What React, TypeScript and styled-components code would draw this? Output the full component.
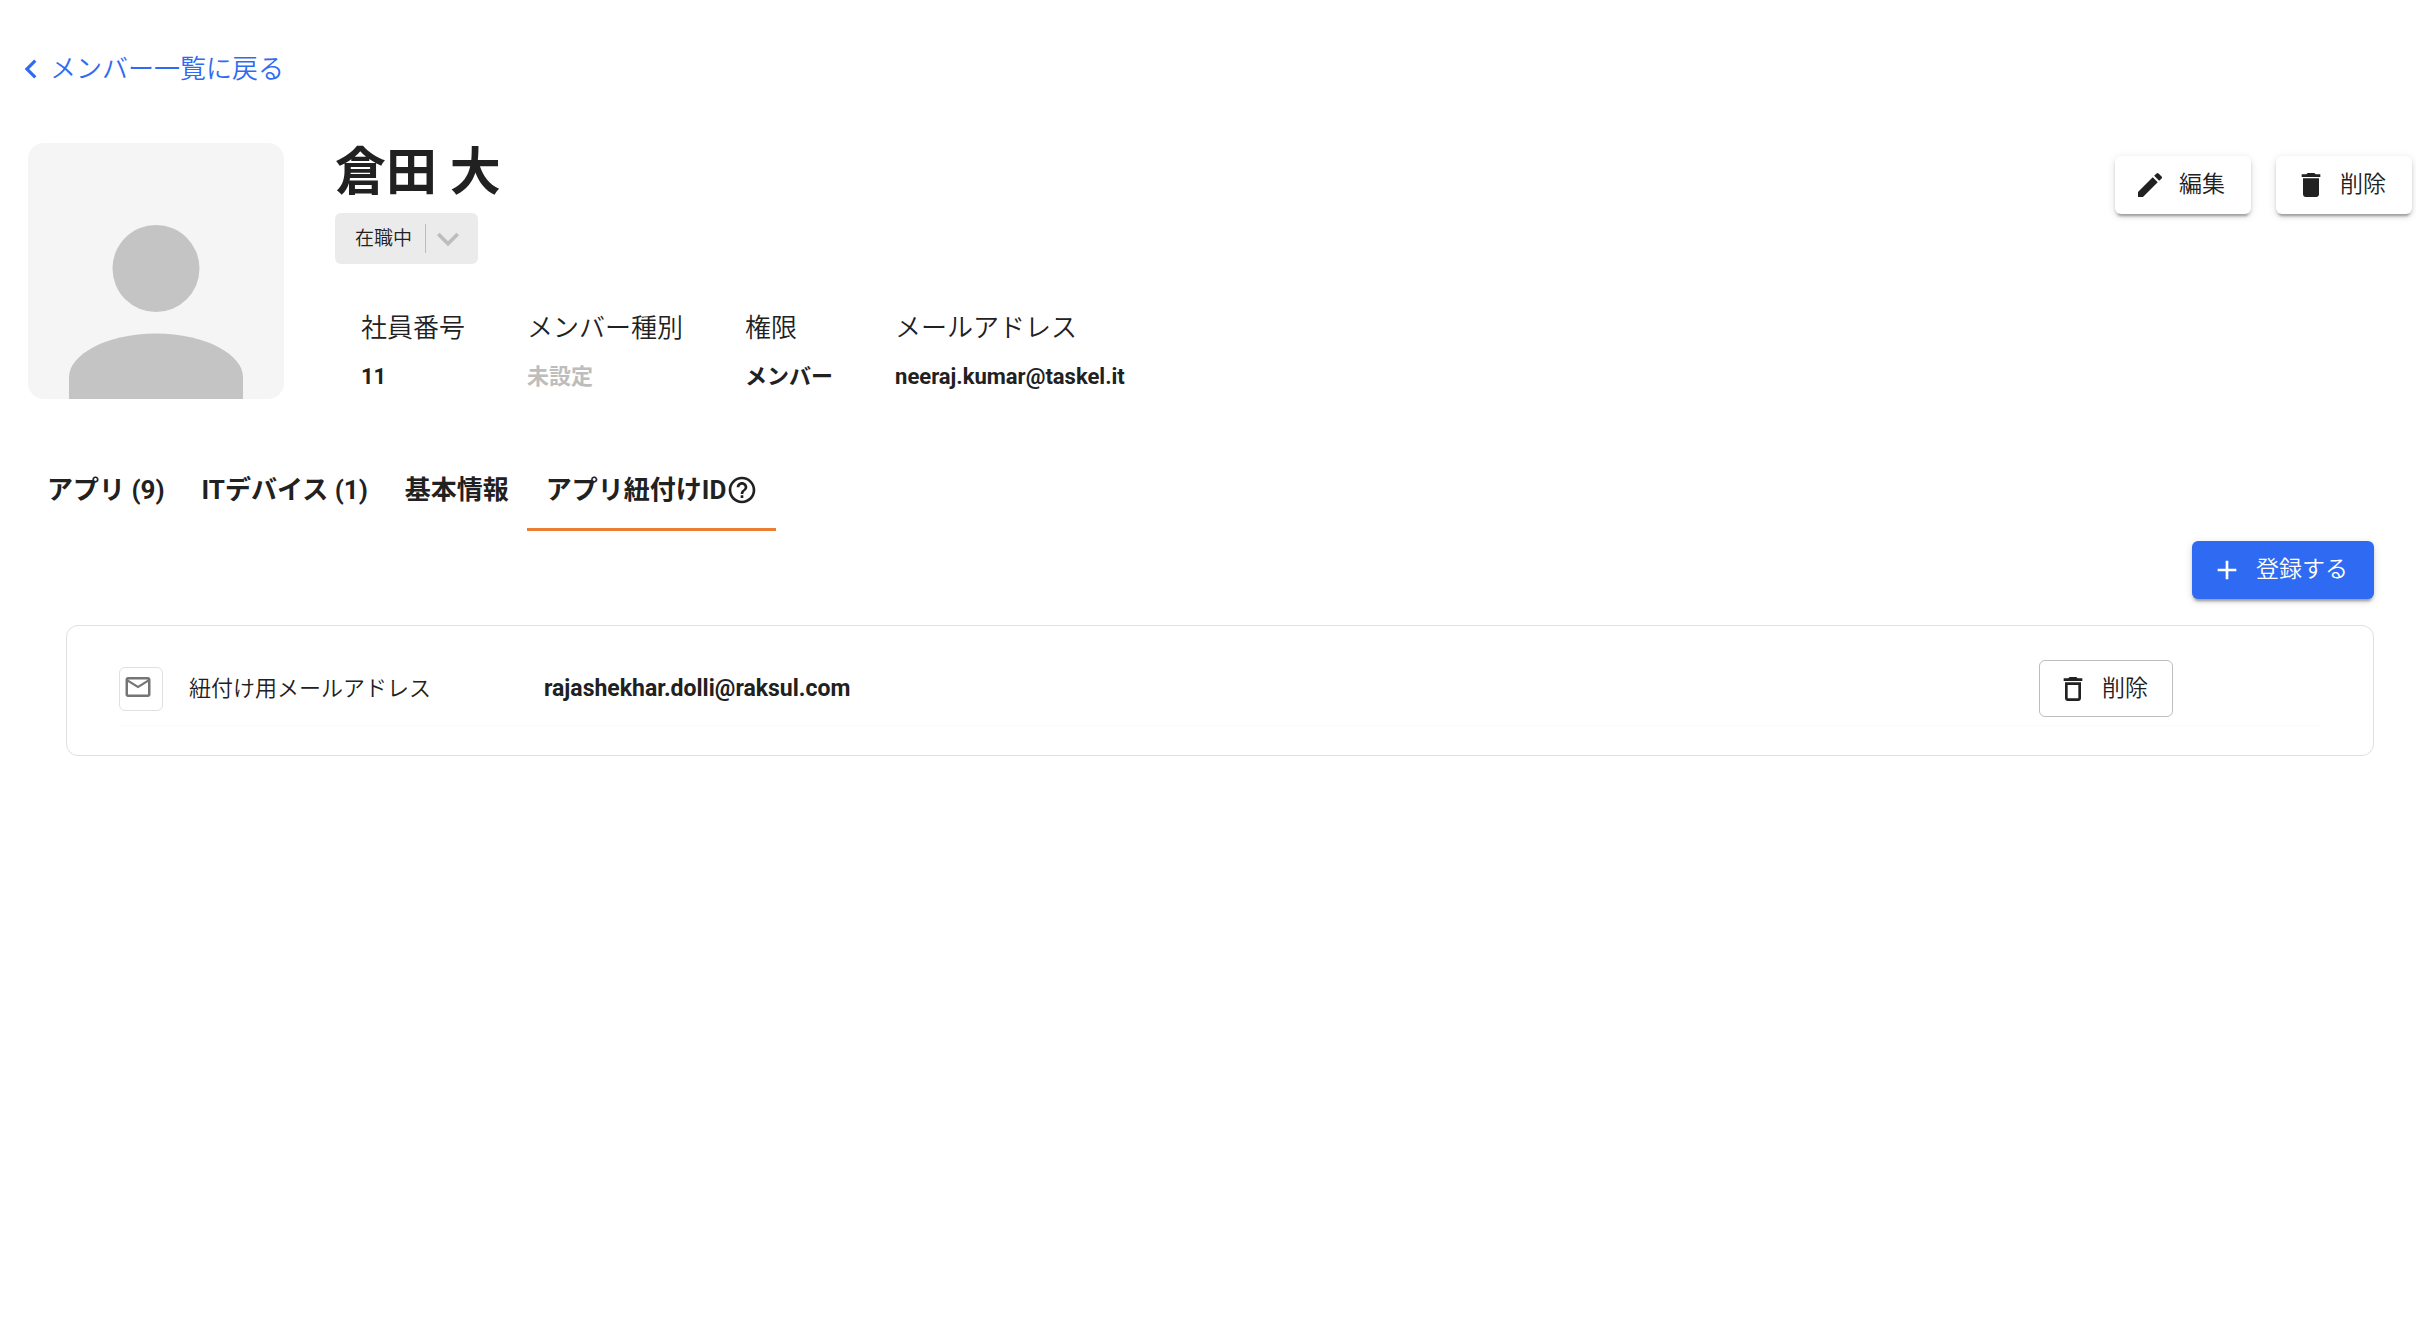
import React from 'react';
import styled, { createGlobalStyle } from 'styled-components';
import {
  MdAdd,
  MdChevronLeft,
  MdDelete,
  MdDeleteOutline,
  MdEdit,
  MdExpandMore,
  MdHelpOutline,
  MdMailOutline,
} from 'react-icons/md';

const GlobalStyle = createGlobalStyle`
  *, *::before, *::after { box-sizing: border-box; }
  body {
    margin: 0;
    background: #fff;
    color: #212121;
    font-family: Roboto, "Noto Sans CJK JP", sans-serif;
    font-size: 22px;
    font-weight: 350;
    line-height: 32px;
  }
  button, select { font: inherit; color: inherit; }
  h1, dl, dt, dd { margin: 0; }
`;

const Page = styled.div`
  padding: 50px 4px 0 28px;
`;

const BackLink = styled.a`
  display: flex;
  align-items: center;
  width: fit-content;
  margin-left: -16px;
  height: 38px;
  color: #2f6bf2;
  font-size: 26px;
  text-decoration: none;
`;

const Header = styled.header`
  display: flex;
  align-items: flex-start;
  margin-top: 55px;
`;

const Avatar = styled.svg`
  flex: none;
  width: 256px;
  height: 256px;
  border-radius: 16px;
  background: #f5f5f5;
`;

const Summary = styled.div`
  flex: 1;
  padding-left: 51px;
`;

const Name = styled.h1`
  font-size: 51px;
  line-height: 60px;
  font-weight: 700;
`;

const StatusChip = styled.div`
  display: flex;
  align-items: center;
  width: fit-content;
  margin-top: 10px;
  height: 51px;
  padding: 0 8px 0 20px;
  border-radius: 6px;
  background: #ebebeb;
`;

const StatusSelect = styled.select`
  appearance: none;
  border: 0;
  padding: 0 12px 0 0;
  background: transparent;
  font-size: 19px;
  line-height: 28px;
`;

const StatusArrow = styled.span`
  display: flex;
  align-items: center;
  height: 29px;
  border-left: 1px solid #bdbdbd;
  color: #bdbdbd;
  pointer-events: none;
`;

const Facts = styled.dl`
  display: flex;
  gap: 62px;
  padding: 48px 0 0 26px;
`;

const FactLabel = styled.dt`
  font-size: 26px;
`;

const FactValue = styled.dd<{ $muted?: boolean }>`
  margin-top: 17px;
  font-weight: 700;
  color: ${(p) => (p.$muted ? '#bdbdbd' : 'inherit')};
`;

const Actions = styled.div`
  display: flex;
  gap: 25px;
  padding-top: 13px;
`;

const Button = styled.button<{ $kind: 'raised' | 'primary' | 'outlined' }>`
  display: inline-flex;
  align-items: center;
  gap: 13px;
  height: ${(p) => (p.$kind === 'outlined' ? '57px' : '58px')};
  padding: ${(p) => (p.$kind === 'outlined' ? '0 24px 0 17px' : '0 26px 0 19px')};
  border: ${(p) => (p.$kind === 'outlined' ? '1px solid #bdbdbd' : '0')};
  border-radius: 6px;
  background: ${(p) => (p.$kind === 'primary' ? '#2f6bf2' : '#fff')};
  color: ${(p) => (p.$kind === 'primary' ? '#fff' : '#212121')};
  box-shadow: ${(p) =>
    p.$kind === 'outlined'
      ? 'none'
      : '0 5px 2px -3px rgba(0,0,0,.2), 0 3px 3px rgba(0,0,0,.14), 0 2px 8px rgba(0,0,0,.12)'};
  font-size: 23px;
  white-space: nowrap;
  cursor: pointer;
`;

const Tabs = styled.div`
  display: flex;
  margin-top: 55px;
`;

const Tab = styled.button<{ $active?: boolean }>`
  display: inline-flex;
  align-items: center;
  height: 77px;
  padding: 0 18px 3px 19px;
  border: 0;
  border-bottom: 3px solid ${(p) => (p.$active ? '#ed7d31' : 'transparent')};
  background: transparent;
  font-size: 26px;
  font-weight: 700;
  cursor: pointer;
`;

const Panel = styled.section`
  display: flex;
  flex-direction: column;
  align-items: flex-end;
  gap: 26px;
  padding: 10px 38px 0;
`;

const Card = styled.div`
  width: 100%;
  padding: 26px 52px 29px;
  border: 1px solid #e0e0e0;
  border-radius: 12px;
`;

const Row = styled.div`
  display: grid;
  grid-template-columns: 70px 355px 1fr 282px;
  align-items: center;
  height: 74px;
  border-bottom: 1px solid #fafafa;
`;

const IconBox = styled.span`
  display: flex;
  align-items: center;
  width: 44px;
  height: 44px;
  padding: 0 3px 3px;
  border: 1px solid #e0e0e0;
  border-radius: 6px;
  color: #757575;
`;

const RowValue = styled.span`
  font-size: 23px;
  font-weight: 700;
`;

const facts = [
  { label: '社員番号', value: '11' },
  { label: 'メンバー種別', value: '未設定', muted: true },
  { label: '権限', value: 'メンバー' },
  { label: 'メールアドレス', value: 'neeraj.kumar@taskel.it' },
];

export default function App() {
  return (
    <Page>
      <GlobalStyle />
      <BackLink href="#members">
        <MdChevronLeft size={38} />
        メンバー一覧に戻る
      </BackLink>

      <Header>
        <Avatar viewBox="0 0 256 256" fill="#c4c4c4" aria-hidden="true">
          <circle cx="128" cy="125.5" r="43.5" />
          <path d="M41 256V234C41 212 78 190.500 128 190.500S215 212 215 234V256Z" />
        </Avatar>
        <Summary>
          <Name>倉田 大</Name>
          <StatusChip>
            <StatusSelect aria-label="在職状況" defaultValue="active">
              <option value="active">在職中</option>
            </StatusSelect>
            <StatusArrow>
              <MdExpandMore size={44} />
            </StatusArrow>
          </StatusChip>
          <Facts>
            {facts.map((f) => (
              <div key={f.label}>
                <FactLabel>{f.label}</FactLabel>
                <FactValue $muted={f.muted}>{f.value}</FactValue>
              </div>
            ))}
          </Facts>
        </Summary>
        <Actions>
          <Button $kind="raised">
            <MdEdit size={32} />
            編集
          </Button>
          <Button $kind="raised">
            <MdDelete size={32} />
            削除
          </Button>
        </Actions>
      </Header>

      <Tabs role="tablist">
        <Tab role="tab" aria-selected={false}>アプリ (9)</Tab>
        <Tab role="tab" aria-selected={false}>ITデバイス (1)</Tab>
        <Tab role="tab" aria-selected={false}>基本情報</Tab>
        <Tab role="tab" aria-selected $active>
          アプリ紐付けID
          <MdHelpOutline size={32} />
        </Tab>
      </Tabs>

      <Panel role="tabpanel">
        <Button $kind="primary">
          <MdAdd size={32} />
          登録する
        </Button>
        <Card>
          <Row>
            <IconBox>
              <MdMailOutline size={30} />
            </IconBox>
            <span>紐付け用メールアドレス</span>
            <RowValue>rajashekhar.dolli@raksul.com</RowValue>
            <div>
              <Button $kind="outlined">
                <MdDeleteOutline size={32} />
                削除
              </Button>
            </div>
          </Row>
        </Card>
      </Panel>
    </Page>
  );
}
